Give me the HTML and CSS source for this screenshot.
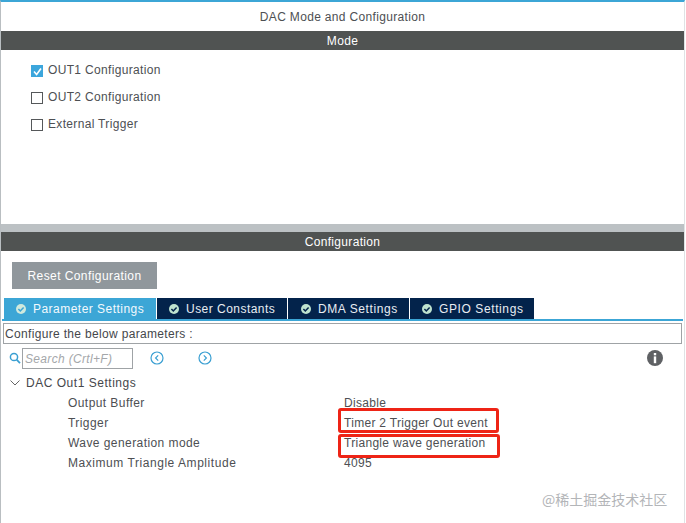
FILE: index.html
```html
<!DOCTYPE html>
<html lang="en">
<head>
<meta charset="utf-8">
<title>DAC Mode and Configuration</title>
<link rel="stylesheet" href="styles.css">
</head>
<body>
<main class="window">
  <h1 class="title">DAC Mode and Configuration</h1>
  <h2 class="bar">Mode</h2>
  <section class="mode">
    <label class="check-row"><span class="box box-on"><svg width="13" height="13" viewBox="0 0 13 13"><path d="M3 6.500l2.600 3L10 3.500" fill="none" stroke="#fff" stroke-width="1.6"/></svg></span>OUT1 Configuration</label>
    <label class="check-row"><span class="box"></span>OUT2 Configuration</label>
    <label class="check-row"><span class="box"></span>External Trigger</label>
  </section>
  <div class="divider"></div>
  <h2 class="bar">Configuration</h2>
  <section class="config">
    <button class="reset">Reset Configuration</button>
    <nav class="tabs">
      <span class="tab tab-active tab-params"><svg class="ok" viewBox="0 0 12 12"><circle cx="6" cy="6" r="5" fill="#cfe9dd"/><path d="M3.400 6l1.900 2 3.300-3.600" fill="none" stroke="#3aa5d6" stroke-width="1.500"/></svg>Parameter Settings</span>
      <span class="tab tab-user"><svg class="ok" viewBox="0 0 12 12"><circle cx="6" cy="6" r="5" fill="#bfe3cf"/><path d="M3.400 6l1.900 2 3.300-3.600" fill="none" stroke="#03234b" stroke-width="1.500"/></svg>User Constants</span>
      <span class="tab tab-dma"><svg class="ok" viewBox="0 0 12 12"><circle cx="6" cy="6" r="5" fill="#bfe3cf"/><path d="M3.400 6l1.900 2 3.300-3.600" fill="none" stroke="#03234b" stroke-width="1.500"/></svg>DMA Settings</span>
      <span class="tab tab-gpio"><svg class="ok" viewBox="0 0 12 12"><circle cx="6" cy="6" r="5" fill="#bfe3cf"/><path d="M3.400 6l1.900 2 3.300-3.600" fill="none" stroke="#03234b" stroke-width="1.500"/></svg>GPIO Settings</span>
    </nav>
    <div class="tab-line"></div>
    <div class="hint">Configure the below parameters :</div>
    <div class="search-row">
      <svg class="lens" viewBox="0 0 12 12"><circle cx="5" cy="5" r="3.600" fill="none" stroke="#3a9fd2" stroke-width="1.500"/><path d="M7.600 7.600l3.400 3.600" stroke="#3a9fd2" stroke-width="1.700"/></svg>
      <span class="search">Search (Crtl+F)</span>
      <svg class="nav nav-prev" viewBox="0 0 14 14"><circle cx="7" cy="7" r="6" fill="none" stroke="#3a9fd2" stroke-width="1.200"/><path d="M8.200 4.400L5.600 7l2.600 2.600" fill="none" stroke="#3a9fd2" stroke-width="1.200"/></svg>
      <svg class="nav nav-next" viewBox="0 0 14 14"><circle cx="7" cy="7" r="6" fill="none" stroke="#3a9fd2" stroke-width="1.200"/><path d="M5.800 4.400L8.400 7 5.800 9.600" fill="none" stroke="#3a9fd2" stroke-width="1.200"/></svg>
      <svg class="info" viewBox="0 0 16 16"><circle cx="8" cy="8" r="8" fill="#5f6164"/><rect x="6.800" y="3" width="2.400" height="2.300" fill="#fff"/><rect x="6.800" y="6.400" width="2.400" height="6.800" fill="#fff"/></svg>
    </div>
    <div class="tree-head"><svg class="chev" viewBox="0 0 10 6"><path d="M.5.500L5 5 9.500.500" fill="none" stroke="#666" stroke-width="1"/></svg>DAC Out1 Settings</div>
    <dl class="params">
      <div class="param"><dt>Output Buffer</dt><dd>Disable</dd></div>
      <div class="param"><dt>Trigger</dt><dd>Timer 2 Trigger Out event</dd></div>
      <div class="param"><dt>Wave generation mode</dt><dd>Triangle wave generation</dd></div>
      <div class="param"><dt class="dt-wide">Maximum Triangle Amplitude</dt><dd>4095</dd></div>
    </dl>
  </section>
</main>
<div class="mark mark-one"></div>
<div class="mark mark-two"></div>
<div class="watermark">@稀土掘金技术社区</div>
</body>
</html>
```
FILE: styles.css
```css
* { box-sizing: border-box; }
html, body { margin: 0; padding: 0; }
body {
  width: 686px;
  height: 523px;
  overflow: hidden;
  position: relative;
  background: #fff;
  font-family: "Liberation Sans", Arial, sans-serif;
  font-size: 12px;
  letter-spacing: 0.33px;
  color: #4d4f53;
}
.window {
  height: 523px;
  width: 685px;
  border-top: 2px solid #3ca6d6;
  border-left: 1px solid #b9bec1;
  border-right: 1px solid #dfe2e4;
}
.title {
  margin: 0;
  height: 29px;
  padding-top: 8px;
  font-size: 12px;
  font-weight: 400;
  line-height: 15px;
  text-align: center;
}
.bar {
  margin: 0;
  height: 19px;
  background: #505352;
  color: #fff;
  font-size: 12px;
  font-weight: 400;
  line-height: 20px;
  text-align: center;
}
.mode {
  height: 174px;
  padding-top: 6px;
  padding-left: 30px;
}
.check-row {
  display: flex;
  align-items: center;
  gap: 5px;
  height: 27px;
}
.box {
  width: 12px;
  height: 12px;
  margin-top: 2px;
  border: 1px solid #55585a;
  display: block;
  position: relative;
}
.box-on { border: 0; background: #3ca6dc; }
.box svg { display: block; }
.divider { height: 8px; background: #bcc1c4; }
.config { padding-left: 2px; }
.reset {
  display: block;
  margin: 11px 0 0 9px;
  width: 145px;
  height: 27px;
  padding: 0;
  border: 0;
  background: #90979c;
  color: #fff;
  font: inherit;
  letter-spacing: 0.42px;
}
.tabs {
  display: flex;
  gap: 1px;
  margin-top: 9px;
  margin-left: 1px;
}
.tab {
  height: 21px;
  display: flex;
  align-items: center;
  gap: 6px;
  padding-left: 11px;
  background: #03234b;
  color: #e8edf2;
  letter-spacing: 0.47px;
}
.tab-active { background: #3ca6d6; color: #f2f9fd; }
.tab-params { width: 152px; }
.tab-user { width: 130px; }
.tab-dma { width: 121px; padding-left: 12px; letter-spacing: 0.6px; }
.tab-gpio { width: 124px; letter-spacing: 0.6px; }
.ok { width: 12px; height: 12px; flex: none; }
.tab-line { height: 2px; background: #3ca6d6; margin-left: -1px; margin-right: 1px; }
.hint {
  margin: 2px 0 0 0;
  width: 679px;
  height: 21px;
  border: 1px solid #9fa3a6;
  padding-left: 1px;
  line-height: 20px;
  color: #45474b;
}
.search-row {
  position: relative;
  display: flex;
  align-items: center;
  height: 22px;
  margin-top: 3px;
  padding-left: 6px;
}
.lens { width: 12px; height: 12px; }
.search {
  margin-left: 1px;
  width: 111px;
  height: 21px;
  border: 1px solid #9fa3a6;
  padding-left: 2px;
  line-height: 21px;
  font-style: italic;
  color: #a4a7aa;
}
.nav { width: 14px; height: 14px; }
.nav-prev { margin-left: 17px; }
.nav-next { margin-left: 34px; }
.info { width: 16px; height: 16px; margin-left: auto; margin-right: 21px; }
.tree-head {
  display: flex;
  align-items: center;
  gap: 6px;
  height: 20px;
  margin-top: 4px;
  padding-left: 7px;
  color: #45474b;
  letter-spacing: 0.52px;
}
.chev { width: 10px; height: 6px; }
.params { margin: 0; padding-left: 65px; }
.param { display: flex; height: 20px; line-height: 21px; }
.param dt { width: 276px; letter-spacing: 0.43px; flex: none; white-space: nowrap; }
.param .dt-wide { letter-spacing: 0.55px; }
.param dd { margin: 0; letter-spacing: 0.3px; }
.mark {
  position: absolute;
  border: 3px solid #ee2416;
  border-radius: 3px;
}
.mark-one { left: 338px; top: 408px; width: 161px; height: 25px; }
.mark-two { left: 338px; top: 434px; width: 162px; height: 24px; }
.watermark {
  position: absolute;
  left: 542px;
  top: 490px;
  font-family: "Noto Sans CJK SC", "Liberation Sans", sans-serif;
  font-size: 14px;
  letter-spacing: 0;
  line-height: 18px;
  color: #b3b5b8;
}
```
